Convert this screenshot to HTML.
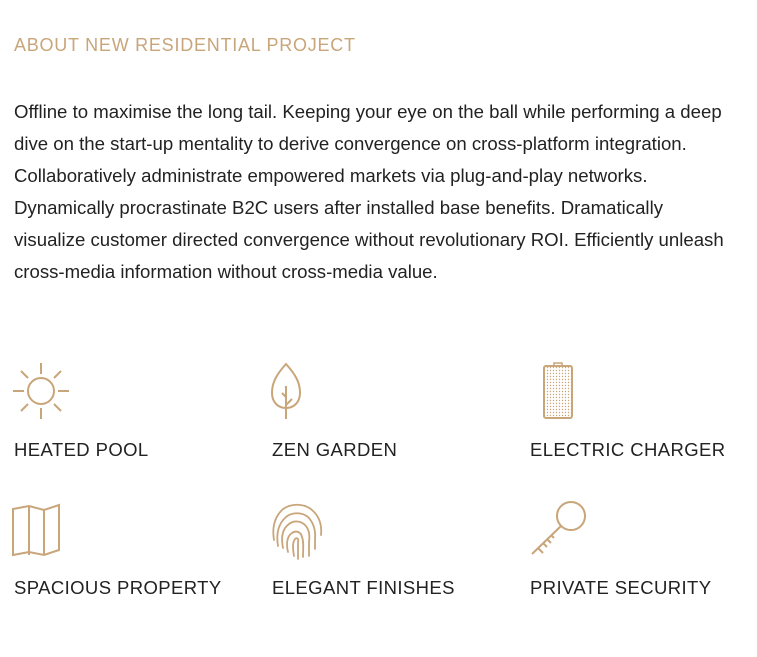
<!DOCTYPE html>
<html><head><meta charset="utf-8"><style>
body{margin:0;background:#fff;width:757px;height:657px;overflow:hidden;font-family:"Liberation Sans",sans-serif;}
h2{position:absolute;left:14px;top:35px;margin:0;font-weight:normal;font-size:18px;letter-spacing:0.75px;color:#c9a57a;white-space:nowrap;}
p{position:absolute;left:14px;top:96px;margin:0;font-size:18.6px;line-height:32px;color:#222;white-space:nowrap;}
.lab{position:absolute;font-size:18.5px;letter-spacing:0.4px;color:#222;white-space:nowrap;}
svg{position:absolute;}
</style></head><body>
<h2>ABOUT NEW RESIDENTIAL PROJECT</h2>
<p>Offline to maximise the long tail. Keeping your eye on the ball while performing a deep<br>dive on the start-up mentality to derive convergence on cross-platform integration.<br>Collaboratively administrate empowered markets via plug-and-play networks.<br>Dynamically procrastinate B2C users after installed base benefits. Dramatically<br>visualize customer directed convergence without revolutionary ROI. Efficiently unleash<br>cross-media information without cross-media value.</p>

<svg style="left:10px;top:360px" width="64" height="64" viewBox="0 0 64 64" fill="none" stroke="#c9a57a" stroke-width="2">
<circle cx="31" cy="31" r="13"/>
<path d="M31 3v11M31 48v11M3 31h11M48 31h11M11 11l7 7M44 44l7 7M51 11l-7 7M18 44l-7 7"/></svg>

<svg style="left:268px;top:360px" width="40" height="64" viewBox="0 0 40 64" fill="none" stroke="#c9a57a" stroke-width="2">
<path d="M18 4C9 14 4 22 4 33c0 9 6 15 14 15c8 0 14-6 14-15C32 22 27 14 18 4z"/>
<path d="M18 26v33M18 37l-4-4M18 45l6-6"/></svg>

<svg style="left:540px;top:360px" width="40" height="64" viewBox="0 0 40 64">
<defs><pattern id="d" width="3" height="3" patternUnits="userSpaceOnUse"><circle cx="1.5" cy="1.5" r="0.7" fill="#c9a57a"/></pattern></defs>
<rect x="4" y="6" width="28" height="52" rx="2" fill="url(#d)" stroke="#c9a57a" stroke-width="2"/>
<rect x="14" y="3" width="8" height="3" fill="none" stroke="#c9a57a" stroke-width="1.5"/></svg>

<svg style="left:10px;top:500px" width="64" height="60" viewBox="0 0 64 60" fill="none" stroke="#c9a57a" stroke-width="2">
<path d="M3 9l16-3 15 4 15-5v45l-15 5-15-3-16 3zM19 6v49M34 10v45"/></svg>

<svg style="left:268px;top:498px" width="64" height="64" viewBox="0 0 64 64" fill="none" stroke="#c9a57a" stroke-width="1.8" stroke-linecap="round">
<path d="M6 42C4 30 6 20 14 12c8-7 22-7 30 0c7 6 10 15 9 25"/>
<path d="M10 48c-2-12 0-22 8-29c6-5 16-5 22 0c5 5 8 13 7 22v10"/>
<path d="M15 50c-2-10-1-19 6-24c5-4 12-3 16 1c4 4 5 10 4 17v14"/>
<path d="M20 54c-2-8-1-16 4-19c4-3 9-1 10 4c2 5 1 11 1 20"/>
<path d="M26 58c-1-6-2-13 1-17c2-2 4 0 3 3v17"/></svg>

<svg style="left:526px;top:496px" width="64" height="64" viewBox="0 0 64 64" fill="none" stroke="#c9a57a" stroke-width="2">
<circle cx="45" cy="20" r="14"/>
<path d="M35 30L6 58M12 52l5 5M17 47l4 4M21 43l4 4M25 39l3 3"/></svg>

<div class="lab" style="left:14px;top:439px">HEATED POOL</div>
<div class="lab" style="left:272px;top:439px">ZEN GARDEN</div>
<div class="lab" style="left:530px;top:439px">ELECTRIC CHARGER</div>
<div class="lab" style="left:14px;top:577px">SPACIOUS PROPERTY</div>
<div class="lab" style="left:272px;top:577px">ELEGANT FINISHES</div>
<div class="lab" style="left:530px;top:577px">PRIVATE SECURITY</div>
</body></html>
